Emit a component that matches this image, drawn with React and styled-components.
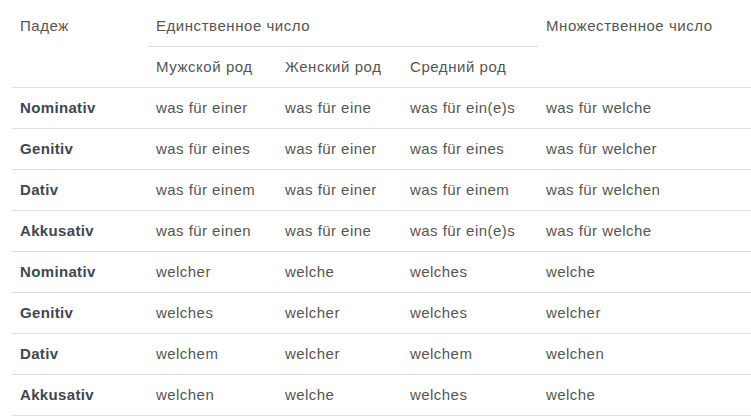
import React from 'react';
import styled, { createGlobalStyle } from 'styled-components';

const GlobalStyle = createGlobalStyle`
  html, body {
    margin: 0;
    padding: 0;
    background: #fff;
  }
  body {
    font-family: "Liberation Sans", Arial, sans-serif;
    font-size: 15px;
    color: #555;
  }
`;

const Wrapper = styled.div`
  padding: 6px 0 0 12px;
  overflow: hidden;
`;

const Table = styled.table`
  width: 100%;
  border-collapse: collapse;
  border-spacing: 0;
  table-layout: fixed;
  font-size: 15px;
`;

const HeadCell = styled.th`
  text-align: left;
  font-weight: normal;
  vertical-align: top;
  padding: 10px 8px;
  line-height: 20px;
  color: #555;
  letter-spacing: 0.55px;
  white-space: nowrap;
  border-bottom: ${(p) => (p.$underline ? '1px solid #ddd' : 'none')};
`;

const Row = styled.tr`
  border-top: 1px solid #ddd;

  &:last-child {
    border-bottom: 1px solid #ddd;
  }
`;

const CaseCell = styled.td`
  padding: 10px 8px;
  line-height: 20px;
  font-weight: bold;
  letter-spacing: 0.35px;
  color: #3f4650;
`;

const Cell = styled.td`
  padding: 10px 8px;
  line-height: 20px;
  color: #555;
  letter-spacing: 0.45px;
  white-space: nowrap;
`;

const rows = [
  ['Nominativ', 'was für einer', 'was für eine', 'was für ein(e)s', 'was für welche'],
  ['Genitiv', 'was für eines', 'was für einer', 'was für eines', 'was für welcher'],
  ['Dativ', 'was für einem', 'was für einer', 'was für einem', 'was für welchen'],
  ['Akkusativ', 'was für einen', 'was für eine', 'was für ein(e)s', 'was für welche'],
  ['Nominativ', 'welcher', 'welche', 'welches', 'welche'],
  ['Genitiv', 'welches', 'welcher', 'welches', 'welcher'],
  ['Dativ', 'welchem', 'welcher', 'welchem', 'welchen'],
  ['Akkusativ', 'welchen', 'welche', 'welches', 'welche'],
];

const App = () => (
  <Wrapper>
    <GlobalStyle />
    <Table>
      <colgroup>
        <col style={{ width: 136 }} />
        <col style={{ width: 129 }} />
        <col style={{ width: 125 }} />
        <col style={{ width: 136 }} />
        <col />
      </colgroup>
      <thead>
        <tr>
          <HeadCell rowSpan={2}>Падеж</HeadCell>
          <HeadCell colSpan={3} $underline>
            Единственное число
          </HeadCell>
          <HeadCell rowSpan={2}>Множественное число</HeadCell>
        </tr>
        <tr>
          <HeadCell>Мужской род</HeadCell>
          <HeadCell>Женский род</HeadCell>
          <HeadCell>Средний род</HeadCell>
        </tr>
      </thead>
      <tbody>
        {rows.map((r, i) => (
          <Row key={i}>
            <CaseCell>{r[0]}</CaseCell>
            {r.slice(1).map((v, j) => (
              <Cell key={j}>{v}</Cell>
            ))}
          </Row>
        ))}
      </tbody>
    </Table>
  </Wrapper>
);

export default App;
